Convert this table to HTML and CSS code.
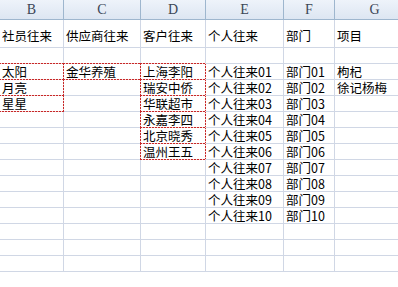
FILE: index.html
```html
<!DOCTYPE html>
<html lang="zh">
<head>
<meta charset="utf-8">
<link rel="stylesheet" href="styles.css">
</head>
<body>
<div class="sheet">
  <div class="hd">B</div><div class="hd">C</div><div class="hd">D</div><div class="hd">E</div><div class="hd">F</div><div class="hd">G</div>

  <div class="c title">社员往来</div><div class="c title">供应商往来</div><div class="c title">客户往来</div><div class="c title">个人往来</div><div class="c title">部门</div><div class="c title">项目</div>

  <div class="c"></div><div class="c"></div><div class="c"></div><div class="c"></div><div class="c"></div><div class="c"></div>

  <div class="c mark">太阳</div><div class="c mark">金华养殖</div><div class="c mark">上海李阳</div><div class="c">个人往来01</div><div class="c">部门01</div><div class="c">枸杞</div>
  <div class="c mark">月亮</div><div class="c"></div><div class="c mark">瑞安中侨</div><div class="c">个人往来02</div><div class="c">部门02</div><div class="c">徐记杨梅</div>
  <div class="c mark">星星</div><div class="c"></div><div class="c mark">华联超市</div><div class="c">个人往来03</div><div class="c">部门03</div><div class="c"></div>
  <div class="c"></div><div class="c"></div><div class="c mark">永嘉李四</div><div class="c">个人往来04</div><div class="c">部门04</div><div class="c"></div>
  <div class="c"></div><div class="c"></div><div class="c mark">北京晓秀</div><div class="c">个人往来05</div><div class="c">部门05</div><div class="c"></div>
  <div class="c"></div><div class="c"></div><div class="c mark">温州王五</div><div class="c">个人往来06</div><div class="c">部门06</div><div class="c"></div>
  <div class="c"></div><div class="c"></div><div class="c"></div><div class="c">个人往来07</div><div class="c">部门07</div><div class="c"></div>
  <div class="c"></div><div class="c"></div><div class="c"></div><div class="c">个人往来08</div><div class="c">部门08</div><div class="c"></div>
  <div class="c"></div><div class="c"></div><div class="c"></div><div class="c">个人往来09</div><div class="c">部门09</div><div class="c"></div>
  <div class="c"></div><div class="c"></div><div class="c"></div><div class="c">个人往来10</div><div class="c">部门10</div><div class="c"></div>
  <div class="c"></div><div class="c"></div><div class="c"></div><div class="c"></div><div class="c"></div><div class="c"></div>
  <div class="c"></div><div class="c"></div><div class="c"></div><div class="c"></div><div class="c"></div><div class="c"></div>
  <div class="c"></div><div class="c"></div><div class="c"></div><div class="c"></div><div class="c"></div><div class="c"></div>
</div>
</body>
</html>
```
FILE: styles.css
```css
html, body {
  margin: 0;
  padding: 0;
  background: #ffffff;
  overflow: hidden;
}
.sheet {
  display: grid;
  grid-template-columns: 64px 77px 65px 78px 51px 80px;
  grid-template-rows: 20px 28px 16px;
  grid-auto-rows: 16px;
  width: 415px;
  font-family: "Noto Sans CJK SC", "Noto Sans", sans-serif;
  font-size: 12.5px;
  color: #000;
}
.hd {
  box-sizing: border-box;
  background: linear-gradient(#eef3fa, #dde6f2);
  border-right: 1px solid #9eb6ce;
  border-bottom: 1px solid #9eb6ce;
  text-align: center;
  font-family: "Liberation Serif", "DejaVu Serif", serif;
  font-size: 14px;
  line-height: 19px;
  color: #3b4656;
}
.c {
  position: relative;
  box-sizing: border-box;
  border-right: 1px solid #d0d7e5;
  border-bottom: 1px solid #d0d7e5;
  padding: 0 0 0 2px;
  line-height: 15px;
  white-space: nowrap;
  display: flex;
  align-items: flex-end;
}
.title {
  padding-bottom: 4px;
}
.mark::after {
  content: "";
  position: absolute;
  left: -1px;
  top: -1px;
  right: -1px;
  bottom: -1px;
  z-index: 2;
  pointer-events: none;
  background:
    repeating-linear-gradient(90deg, #c62828 0 2px, #f5d5d5 2px 3px) top left / 100% 1px no-repeat,
    repeating-linear-gradient(90deg, #c62828 0 2px, #f5d5d5 2px 3px) bottom left / 100% 1px no-repeat,
    repeating-linear-gradient(180deg, #c62828 0 2px, #f5d5d5 2px 3px) top left / 1px 100% no-repeat,
    repeating-linear-gradient(180deg, #c62828 0 2px, #f5d5d5 2px 3px) top right / 1px 100% no-repeat;
}
```
